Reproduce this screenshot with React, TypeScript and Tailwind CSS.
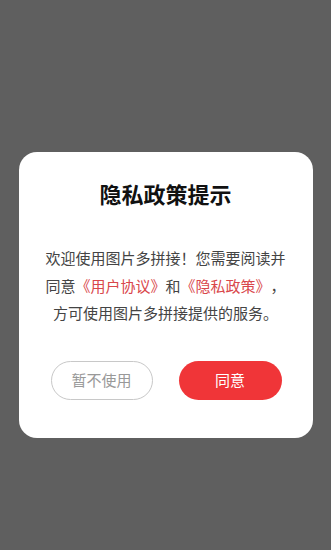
export default function App() {
  return (
    <div
      className="flex h-[550px] w-full flex-col items-center bg-[#5f5f5f] pt-[152px]"
      style={{ fontFamily: '"Noto Sans CJK SC", "Noto Sans", sans-serif' }}
    >
      {/* Dialog */}
      <div className="flex h-[286px] w-[294px] flex-col items-center rounded-[18px] bg-white pt-[26px]">
        <h1 className="text-[22px] font-bold leading-[30px] text-[#111]">隐私政策提示</h1>

        <p className="mt-[36px] text-center text-[15px] leading-[27.5px] text-[#444] [text-spacing-trim:space-all]">
          欢迎使用图片多拼接！您需要阅读并
          <br />
          同意<span className="text-[#d9474b]">《用户协议》</span>和
          <span className="text-[#d9474b]">《隐私政策》</span>，
          <br />
          方可使用图片多拼接提供的服务。
        </p>

        <div className="mt-[34px] flex gap-[26px] pl-[1px]">
          <button className="h-[39px] w-[102px] rounded-full border border-[#c8c8c8] text-[15px] text-[#999]">
            暂不使用
          </button>
          <button className="h-[39px] w-[103px] rounded-full bg-[#f03538] text-[15px] text-white">
            同意
          </button>
        </div>
      </div>
    </div>
  );
}
